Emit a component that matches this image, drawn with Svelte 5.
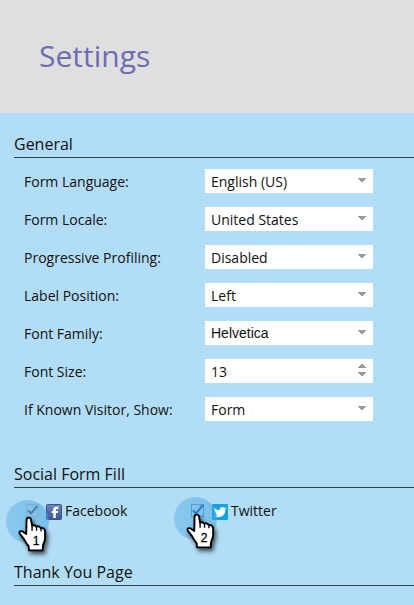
<script>
  const fields = [
    { label: 'Form Language:', value: 'English (US)' },
    { label: 'Form Locale:', value: 'United States' },
    { label: 'Progressive Profiling:', value: 'Disabled' },
    { label: 'Label Position:', value: 'Left' },
    { label: 'Font Family:', value: 'Helvetica', helvetica: true },
    { label: 'Font Size:', value: '13', spinner: true },
    { label: 'If Known Visitor, Show:', value: 'Form' }
  ];
</script>

{#snippet pointer(step)}
  <span class="marker">
    <svg class="hand" width="35" height="42" viewBox="0 0 102 126" preserveAspectRatio="none">
      <path
        d="M25 11Q25 5 31 5Q37 5 38 11L41 29Q49 25 53 32Q61 28 66 36Q76 34 79 45L79 67Q78 77 73 87L72 103L32 103L31 91Q23 81 18 70L5 53Q2 43 13 46L24 54Z"
        fill="#fff" stroke="#000" stroke-width="5.5" stroke-linejoin="round" />
      <path d="M41 28V44M54 32V44M67 36V46" stroke="#000" stroke-width="4" />
    </svg>
    <b>{step}</b>
  </span>
{/snippet}

<main>
  <header><h1>Settings</h1></header>
  <section class="general">
    <h2>General</h2>
    <div class="rows">
      {#each fields as field}
        <div class="row">
          <span class="label">{field.label}</span>
          <div class="box">
            <span class:helvetica={field.helvetica}>{field.value}</span>
            <svg width="8" height="24" viewBox="0 0 8 24" fill="#999" shape-rendering="crispEdges">
              {#if field.spinner}
                <path d="M3 5H5V6H6V7H7V8H8V9H0V8H1V7H2V6H3ZM0 13H8V14H7V15H6V16H5V17H3V16H2V15H1V14H0Z" />
              {:else}
                <path d="M0 9H8V10H7V11H6V12H5V13H3V12H2V11H1V10H0Z" />
              {/if}
            </svg>
          </div>
        </div>
      {/each}
    </div>
  </section>
  <section class="social">
    <h2>Social Form Fill</h2>
    <div class="networks">
      <div class="network">
        <span class="check">
          <svg width="13" height="13" viewBox="0 0 13 13">
            <rect x=".5" y=".5" width="12" height="12" fill="#bcd6e6" stroke="#a7bdcc" />
            <path d="M2 6.3L5 9.4L11.3 2" fill="none" stroke="#4b6a80" stroke-width="2" />
          </svg>
          {@render pointer(1)}
        </span>
        <svg class="logo" width="16" height="16" viewBox="0 0 16 16">
          <defs>
            <linearGradient id="fb" x2="0" y2="1">
              <stop stop-color="#7086bb" /><stop offset="1" stop-color="#3c5395" />
            </linearGradient>
          </defs>
          <rect x=".5" y=".5" width="15" height="15" rx="1" fill="url(#fb)" stroke="#3b5290" />
          <path d="M7.2 14V9H5.6V6.9H7.2V5.6Q7.2 2.8 10 2.8H12.3V5H10.8Q9.8 5 9.8 6V6.9H12.2L11.9 9H9.8V14Z" fill="#fff" />
        </svg>
        <span class="name">Facebook</span>
      </div>
      <div class="network">
        <span class="check">
          <svg width="13" height="13" viewBox="0 0 13 13">
            <rect x=".5" y=".5" width="12" height="12" fill="#b4dcf5" stroke="#5a98cc" />
            <path d="M2 6.3L5 9.4L12 1" fill="none" stroke="#155da0" stroke-width="2" />
          </svg>
          {@render pointer(2)}
        </span>
        <svg class="logo" width="16" height="16" viewBox="0 0 16 16">
          <rect width="16" height="16" rx="1" fill="#12a5e5" />
          <path d="M2.3 3.7Q4.6 6.4 7.8 6.5Q7.4 3.2 10.3 3.1Q11.5 3.1 12.3 3.9L14 3.3L13.2 4.7L14.4 4.5L13.3 5.7Q13.3 10.8 9.2 12.6Q5.4 13.9 1.9 12Q4.2 12 5.5 11Q3.7 10.7 3.2 9.1H4.3Q2.3 8.3 2.2 6.4L3.2 6.6Q1.6 5.3 2.3 3.7Z" fill="#fff" />
        </svg>
        <span class="name">Twitter</span>
      </div>
    </div>
  </section>
  <section><h2>Thank You Page</h2></section>
</main>

<style>
  main {
    height: 605px;
    overflow: hidden;
    background: #b1ddf6;
    color: #111;
    font: 14px/24px "Open Sans", "Noto Sans", sans-serif;
  }
  header {
    height: 113px;
    box-sizing: border-box;
    padding: 36px 0 0 39px;
    background: #dfdfdf;
  }
  h1 {
    margin: 0;
    font-size: 30px;
    line-height: 40px;
    font-weight: 400;
    color: #6e6cb4;
  }
  section { padding-left: 14px; }
  .general { height: 330px; box-sizing: border-box; padding-top: 19px; }
  h2 {
    margin: 0;
    height: 25px;
    border-bottom: 1px solid #35454e;
    font-size: 16px;
    line-height: 24px;
    font-weight: 400;
  }
  .rows {
    display: flex;
    flex-direction: column;
    gap: 14px;
    padding: 11px 0 0 10px;
  }
  .row { display: flex; height: 24px; }
  .label { width: 181px; line-height: 26px; white-space: nowrap; }
  .box {
    display: flex;
    justify-content: space-between;
    box-sizing: border-box;
    width: 168px;
    padding: 0 7px 0 6px;
    background: #fff;
    line-height: 26px;
  }
  .helvetica { font-family: "Liberation Sans", Arial, sans-serif; line-height: 24px; }
  .social { height: 98px; padding-top: 19px; }
  .networks { display: flex; padding: 16px 0 0 12px; }
  .network { display: flex; width: 165px; height: 16px; }
  .check { position: relative; width: 20px; height: 13px; }
  .network + .network .check { width: 21px; }
  .check > svg { display: block; }
  .logo { flex: none; }
  .name { margin-left: 3px; line-height: 16px; margin-top: -1px; }
  .marker {
    position: absolute;
    left: -20px;
    top: -4px;
    width: 43px;
    height: 43px;
    border-radius: 50%;
    background: linear-gradient(90deg, rgba(68, 164, 224, .36), rgba(68, 164, 224, .5));
  }
  .network + .network .marker { left: -17px; top: -7px; }
  .hand {
    position: absolute;
    left: 12px;
    top: 16px;
    overflow: visible;
    filter: drop-shadow(2px 3px 2px rgba(0, 0, 0, .65));
  }
  .marker b {
    position: absolute;
    left: 24px;
    top: 34px;
    width: 12px;
    text-align: center;
    font: 12px/14px "Liberation Sans", Arial, sans-serif;
    color: #000;
    -webkit-text-stroke: .3px #000;
  }
</style>
